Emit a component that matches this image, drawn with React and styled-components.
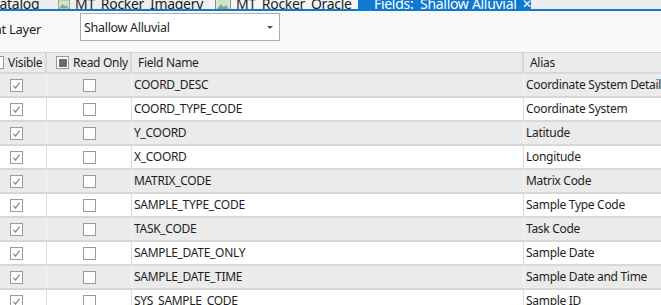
import React from 'react';
import styled, { createGlobalStyle } from 'styled-components';

const GlobalStyle = createGlobalStyle`
  html, body {
    margin: 0;
    padding: 0;
    background: #f8f8f8;
  }
  body {
    font-family: "Noto Sans", "Open Sans", sans-serif;
    color: #1e1e1e;
    letter-spacing: -0.3px;
  }
`;

const Window = styled.div`
  width: 661px;
  height: 305px;
  overflow: hidden;
  background: #f8f8f8;
`;

const TabStrip = styled.div`
  height: 9px;
  display: flex;
  align-items: flex-end;
  background: #eeeeee;
  overflow: hidden;
  margin-left: -19px;
`;

const Tab = styled.div`
  flex: none;
  height: 20px;
  display: flex;
  align-items: center;
  gap: 5px;
  padding: 0 ${(p) => p.$pad || 10}px;
  width: ${(p) => (p.$w ? `${p.$w}px` : 'auto')};
  box-sizing: border-box;
  font-size: 14px;
  line-height: 20px;
  color: ${(p) => (p.$active ? '#ffffff' : '#222')};
  background: ${(p) => (p.$active ? '#0f78d2' : p.$light ? '#f5f5f5' : 'transparent')};
  white-space: nowrap;
  overflow: hidden;
  transform: translateY(5px);
`;

const Close = styled.span`
  margin-left: auto;
  margin-right: 4px;
  font-size: 12px;
`;

const BlueLine = styled.div`
  height: 2px;
  background: #0f78d2;
`;

const Toolbar = styled.div`
  height: 41px;
  display: flex;
  align-items: center;
  gap: 39px;
  margin-left: -54px;
  background: #f8f8f8;
`;

const Label = styled.span`
  font-size: 13px;
  width: 95px;
  text-align: right;
  flex: none;
  margin-top: -5px;
`;

const Select = styled.div`
  width: 200px;
  height: 28px;
  box-sizing: border-box;
  border: 1px solid #acacac;
  background: #ffffff;
  display: flex;
  align-items: center;
  padding: 0 6px 0 3px;
  font-size: 12.5px;
  margin-top: -9px;
`;

const Caret = styled.span`
  margin-left: auto;
  width: 0;
  height: 0;
  border-left: 3px solid transparent;
  border-right: 3px solid transparent;
  border-top: 3px solid #555;
`;

const Table = styled.div`
  margin-left: -14px;
  border-top: 1px solid #d2d2d2;
`;

const Row = styled.div`
  display: grid;
  grid-template-columns: 61px 85px 392px 1fr;
  height: ${(p) => (p.$header ? 19 : 22)}px;
  border-bottom: 2px solid #d8d8d8;
  background: ${(p) => (p.$white ? '#ffffff' : '#ebebeb')};
  font-size: 12px;
`;

const Cell = styled.div`
  display: flex;
  align-items: center;
  justify-content: ${(p) => (p.$center ? 'center' : 'flex-start')};
  gap: 4px;
  padding-left: ${(p) => p.$pl || 0}px;
  padding-bottom: ${(p) => (p.$center ? 0 : 2)}px;
  border-right: ${(p) => (p.$last ? 'none' : `1px solid ${p.$white ? '#dcdcdc' : '#f6f6f6'}`)};
  white-space: nowrap;
  overflow: hidden;
`;

const HeaderCell = styled(Cell)`
  padding-bottom: 0;
  border-right: ${(p) => (p.$last ? 'none' : '2px solid #d8d8d8')};
`;

const Box = styled.span`
  flex: none;
  width: 13px;
  height: 13px;
  box-sizing: border-box;
  border: 1px solid #9a9a9a;
  background: #ffffff;
  display: flex;
  align-items: center;
  justify-content: center;
`;

const Fill = styled.span`
  width: 8px;
  height: 8px;
  background: #6b6b6b;
`;

function ImageIcon() {
  return (
    <svg width="16" height="13" viewBox="0 0 16 13">
      <rect x="0.5" y="0.5" width="15" height="12" fill="#e6e6e6" stroke="#8a8a8a" />
      <rect x="2" y="2" width="12" height="9" fill="#cfe3c8" />
      <path d="M2 11 L6 6 L9 9 L11 7 L14 11 Z" fill="#7fae6e" />
    </svg>
  );
}

function TableIcon() {
  return (
    <svg width="12" height="12" viewBox="0 0 12 12">
      <rect x="0.5" y="0.5" width="11" height="11" fill="#fff6d8" stroke="#d9b45a" />
      <path d="M0.5 4 H11.5 M0.5 8 H11.5 M6 0.5 V11.5" stroke="#d9b45a" />
    </svg>
  );
}

function Check({ checked }) {
  return (
    <Box>
      {checked && (
        <svg width="9" height="9" viewBox="0 0 9 9">
          <path d="M1.5 4.8 L3.6 7 L7.6 1.5" fill="none" stroke="#7a7a7a" strokeWidth="1.2" />
        </svg>
      )}
    </Box>
  );
}

const fields = [
  ['COORD_DESC', 'Coordinate System Detail'],
  ['COORD_TYPE_CODE', 'Coordinate System'],
  ['Y_COORD', 'Latitude'],
  ['X_COORD', 'Longitude'],
  ['MATRIX_CODE', 'Matrix Code'],
  ['SAMPLE_TYPE_CODE', 'Sample Type Code'],
  ['TASK_CODE', 'Task Code'],
  ['SAMPLE_DATE_ONLY', 'Sample Date'],
  ['SAMPLE_DATE_TIME', 'Sample Date and Time'],
  ['SYS_SAMPLE_CODE', 'Sample ID'],
];

export default function App() {
  return (
    <Window>
      <GlobalStyle />
      <TabStrip>
        <Tab $pad={0} $w={71}>Catalog</Tab>
        <Tab $pad={6} $w={157}>
          <ImageIcon />
          MT_Rocker_Imagery
        </Tab>
        <Tab $pad={6} $w={149} $light>
          <ImageIcon />
          MT_Rocker_Oracle
        </Tab>
        <Tab $pad={11} $w={173} $active>
          <TableIcon />
          Fields:&nbsp; Shallow Alluvial
          <Close>✕</Close>
        </Tab>
      </TabStrip>
      <BlueLine />
      <Toolbar>
        <Label>Current Layer</Label>
        <Select>
          Shallow Alluvial
          <Caret />
        </Select>
      </Toolbar>
      <Table>
        <Row $header>
          <HeaderCell $pl={5}>
            <Box />
            Visible
          </HeaderCell>
          <HeaderCell $pl={9}>
            <Box>
              <Fill />
            </Box>
            Read Only
          </HeaderCell>
          <HeaderCell $pl={6}>Field Name</HeaderCell>
          <HeaderCell $pl={6} $last>
            Alias
          </HeaderCell>
        </Row>
        {fields.map(([name, alias], i) => {
          const white = i % 2 === 1;
          return (
            <Row key={name} $white={white}>
              <Cell $center $white={white}>
                <Check checked />
              </Cell>
              <Cell $center $white={white}>
                <Check />
              </Cell>
              <Cell $pl={2} $white={white}>
                {name}
              </Cell>
              <Cell $pl={2} $last>
                {alias}
              </Cell>
            </Row>
          );
        })}
      </Table>
    </Window>
  );
}
